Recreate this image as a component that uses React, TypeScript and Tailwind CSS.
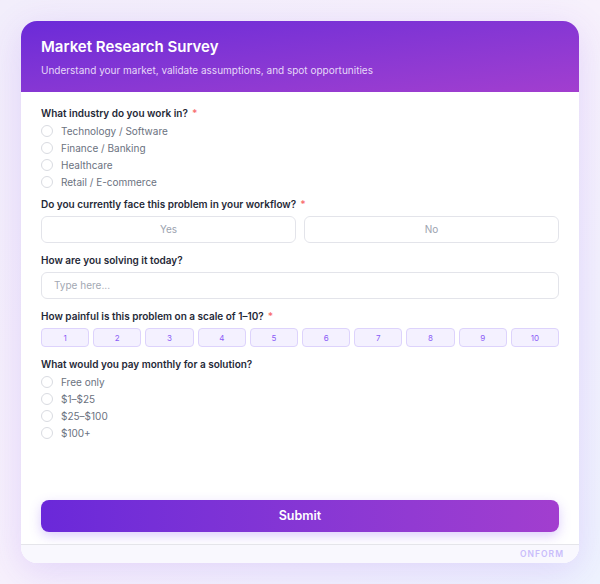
import React from "react";

const Radio = ({ label }: { label: string }) => (
  <div className="flex items-center h-[14px] gap-2">
    <span className="w-3 h-3 rounded-full border-[1.5px] border-[#d9dbe1] bg-white shrink-0" />
    <span className="text-[10px] text-[#6b7280] leading-[14px]">{label}</span>
  </div>
);

const Label = ({ text, req, tight }: { text: string; req?: boolean; tight?: boolean }) => (
  <div className={`text-[10px] font-semibold text-[#1f2937] leading-[14px] ${tight ? "mb-[4px]" : "mb-[5px]"}`}>
    {text}
    {req && <span className="text-[#f87171] ml-1">*</span>}
  </div>
);

export default function App() {
  return (
    <div
      className="w-[600px] h-[584px] flex items-center justify-center bg-gradient-to-br from-[#f2eefb] via-[#f7f1fc] to-[#eef3fe]"
      style={{ fontFamily: "Inter, 'Noto Sans', sans-serif" }}
    >
      <div className="w-[558px] h-[542px] bg-white rounded-[16px] overflow-hidden flex flex-col shadow-[0_8px_36px_rgba(124,58,237,0.16)]">
        <div className="bg-gradient-to-br from-[#6b2ad8] to-[#a23ecf] px-5 pt-[16px] pb-[15px] h-[71px]">
          <div className="text-white text-[15px] font-semibold leading-[20px]">Market Research Survey</div>
          <div className="text-[#e6d8f8] text-[10px] leading-[14px] mt-[6px]">
            Understand your market, validate assumptions, and spot opportunities
          </div>
        </div>
        <div className="flex-1 flex flex-col px-5 pt-[14px] pb-[12px]">
          <div className="flex flex-col">
            <div className="mb-[8px]">
              <Label text="What industry do you work in?" req tight />
              <div className="flex flex-col gap-[3px]">
                <Radio label="Technology / Software" />
                <Radio label="Finance / Banking" />
                <Radio label="Healthcare" />
                <Radio label="Retail / E-commerce" />
              </div>
            </div>
            <div className="mb-[10px]">
              <Label text="Do you currently face this problem in your workflow?" req />
              <div className="flex gap-2">
                <div className="flex-1 h-[27px] rounded-[6px] border-[1.5px] border-[#e3e4ea] flex items-center justify-center text-[10px] text-[#9ca3af]">
                  Yes
                </div>
                <div className="flex-1 h-[27px] rounded-[6px] border-[1.5px] border-[#e3e4ea] flex items-center justify-center text-[10px] text-[#9ca3af]">
                  No
                </div>
              </div>
            </div>
            <div className="mb-[10px]">
              <Label text="How are you solving it today?" />
              <div className="h-[27px] rounded-[6px] border-[1.5px] border-[#e3e4ea] flex items-center px-3 text-[10px] text-[#a3a8b3]">
                Type here...
              </div>
            </div>
            <div className="mb-[10px]">
              <Label text="How painful is this problem on a scale of 1–10?" req />
              <div className="flex gap-[4px]">
                {[1, 2, 3, 4, 5, 6, 7, 8, 9, 10].map((n) => (
                  <div
                    key={n}
                    className="flex-1 h-[19px] rounded-[4px] border border-[#ddd3fc] bg-[#f4f1ff] flex items-center justify-center text-[8px] text-[#8b5cf6]"
                  >
                    {n}
                  </div>
                ))}
              </div>
            </div>
            <div>
              <Label text="What would you pay monthly for a solution?" tight />
              <div className="flex flex-col gap-[3px]">
                <Radio label="Free only" />
                <Radio label="$1–$25" />
                <Radio label="$25–$100" />
                <Radio label="$100+" />
              </div>
            </div>
          </div>
          <div className="mt-auto h-[32px] rounded-[8px] bg-gradient-to-r from-[#6a28d9] to-[#a23ecf] flex items-center justify-center text-white text-[12.5px] font-semibold shadow-[0_4px_12px_rgba(139,92,246,0.3)]">
            Submit
          </div>
        </div>
        <div className="h-[19px] border-t border-[#e5e5ea] bg-[#f9f8fe] flex items-center justify-end pr-[15px]">
          <span className="text-[8.5px] font-semibold tracking-[0.12em] text-[#c9bdfb]">ONFORM</span>
        </div>
      </div>
    </div>
  );
}
